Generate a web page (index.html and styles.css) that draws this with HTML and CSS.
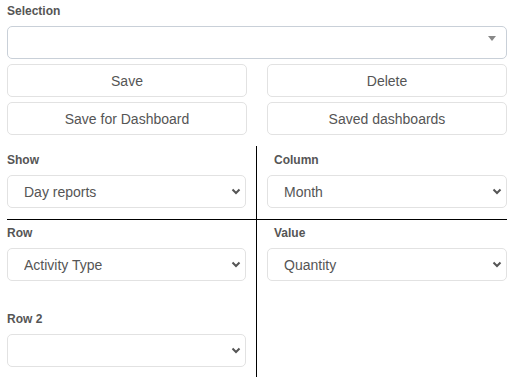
FILE: index.html
```html
<!DOCTYPE html>
<html lang="en">
<head>
  <meta charset="UTF-8" />
  <title>Pivot settings</title>
  <link rel="stylesheet" href="styles.css">
</head>
<body>
  <div class="panel">
    <label class="field-label">Selection</label>
    <div class="picker">
      <span class="picker-arrow"></span>
    </div>

    <div class="actions">
      <button class="btn">Save</button>
      <button class="btn">Delete</button>
      <button class="btn">Save for Dashboard</button>
      <button class="btn">Saved dashboards</button>
    </div>

    <div class="pivot">
      <div class="cell cell-left cell-top">
        <label class="field-label">Show</label>
        <div class="select-wrap">
          <select class="select"><option>Day reports</option></select>
          <svg class="chevron" width="10" height="7" viewBox="0 0 10 7"><path d="M1.5 1.5 L5 5 L8.5 1.5" /></svg>
        </div>
      </div>
      <div class="cell cell-right cell-top">
        <label class="field-label">Column</label>
        <div class="select-wrap">
          <select class="select"><option>Month</option></select>
          <svg class="chevron" width="10" height="7" viewBox="0 0 10 7"><path d="M1.5 1.5 L5 5 L8.5 1.5" /></svg>
        </div>
      </div>
      <div class="cell cell-left cell-bottom">
        <label class="field-label">Row</label>
        <div class="select-wrap">
          <select class="select"><option>Activity Type</option></select>
          <svg class="chevron" width="10" height="7" viewBox="0 0 10 7"><path d="M1.5 1.5 L5 5 L8.5 1.5" /></svg>
        </div>
        <label class="field-label field-gap">Row 2</label>
        <div class="select-wrap">
          <select class="select"><option></option></select>
          <svg class="chevron" width="10" height="7" viewBox="0 0 10 7"><path d="M1.5 1.5 L5 5 L8.5 1.5" /></svg>
        </div>
      </div>
      <div class="cell cell-right cell-bottom">
        <label class="field-label">Value</label>
        <div class="select-wrap">
          <select class="select"><option>Quantity</option></select>
          <svg class="chevron" width="10" height="7" viewBox="0 0 10 7"><path d="M1.5 1.5 L5 5 L8.5 1.5" /></svg>
        </div>
      </div>
    </div>
  </div>
</body>
</html>
```

FILE: styles.css
```css
body {
  margin: 0;
  padding: 0;
  font-family: 'Liberation Sans', Arial, sans-serif;
  color: #555;
  background: #fff;
}

.panel {
  width: 500px;
  padding: 4px 7px 0;
}

.field-label {
  display: block;
  font-size: 12px;
  line-height: 14px;
  font-weight: bold;
  color: #555;
  margin-bottom: 8px;
}

.picker {
  position: relative;
  height: 31px;
  border: 1px solid #c9d0d8;
  border-radius: 5px;
  background: #fff;
}

.picker-arrow {
  position: absolute;
  right: 10px;
  top: 9px;
  width: 0;
  height: 0;
  border-left: 4px solid transparent;
  border-right: 4px solid transparent;
  border-top: 5px solid #888;
}

.actions {
  display: grid;
  grid-template-columns: 240px 240px;
  column-gap: 20px;
  row-gap: 5px;
  margin-top: 5px;
}

.btn {
  height: 33px;
  border: 1px solid #e2e2e2;
  border-radius: 5px;
  background: #fff;
  color: #555;
  font-family: inherit;
  font-size: 14px;
  padding: 0;
}

.pivot {
  display: grid;
  grid-template-columns: 250px 1fr;
  margin-top: 11px;
}

.cell-left {
  border-right: 1px solid #000;
  padding-right: 10px;
}

.cell-right {
  padding-left: 10px;
}

.cell-right .field-label {
  padding-left: 7px;
}

.cell-top {
  padding-top: 7px;
  padding-bottom: 11px;
  border-bottom: 1px solid #000;
}

.cell-bottom {
  padding-top: 6px;
  padding-bottom: 10px;
}

.cell .field-label {
  margin-bottom: 8px;
}

.cell .field-gap {
  margin-top: 31px;
}

.select-wrap {
  position: relative;
}

.select {
  display: block;
  width: 100%;
  height: 33px;
  -webkit-appearance: none;
  appearance: none;
  border: 1px solid #e2e2e2;
  border-radius: 5px;
  background: #fff;
  color: #555;
  font-family: inherit;
  font-size: 14px;
  padding: 0 30px 0 16px;
  outline: none;
}

.chevron {
  position: absolute;
  right: 5px;
  top: 13px;
  pointer-events: none;
}

.chevron path {
  fill: none;
  stroke: #555;
  stroke-width: 2;
}
```
